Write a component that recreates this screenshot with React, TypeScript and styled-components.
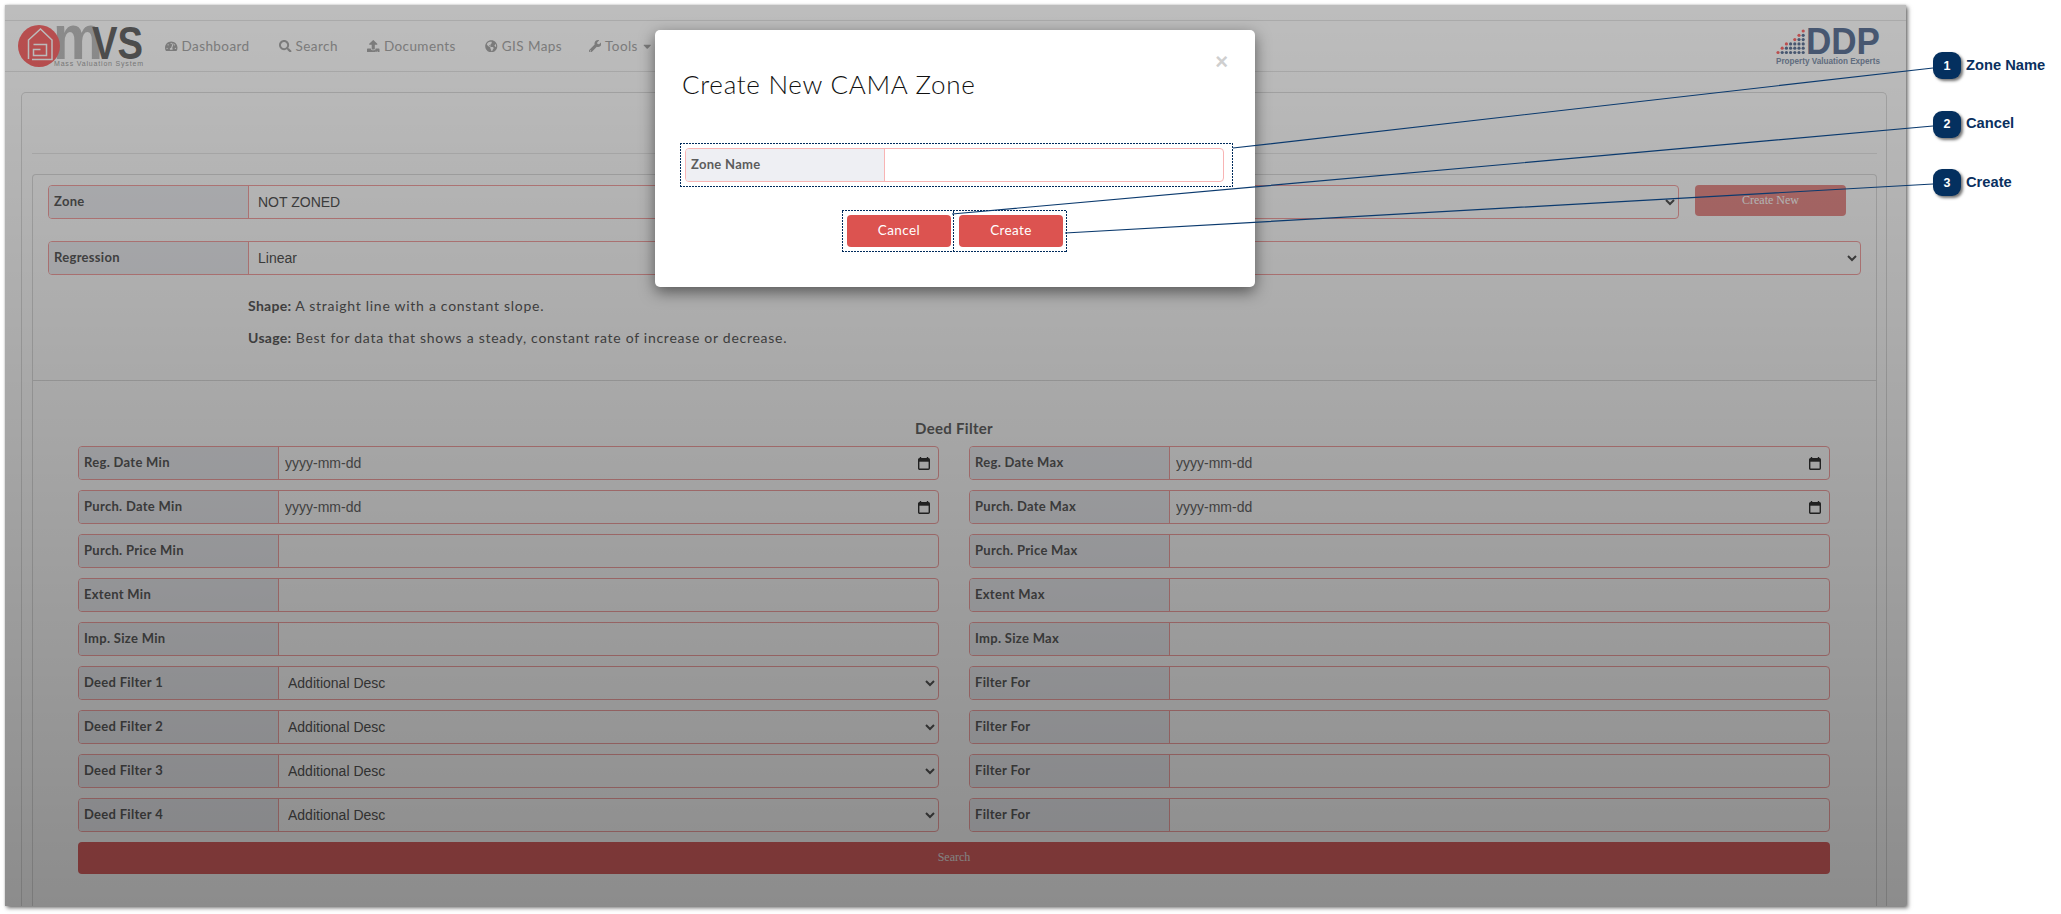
import React from 'react';
import styled, { createGlobalStyle } from 'styled-components';
import { FaCaretDown, FaGlobeAmericas, FaSearch, FaTachometerAlt, FaUpload, FaWrench } from 'react-icons/fa';

const UI_FONT = `Lato, "Noto Sans", sans-serif`;
const FORM_FONT = `"Liberation Sans", Arial, sans-serif`;
const RED = '#dc5350';
const PINK = '#f5a3a3';
const NAVY = '#0b3a6e';

const GlobalStyle = createGlobalStyle`
  html, body {
    margin: 0;
    padding: 0;
    background: #fff;
    overflow: hidden;
  }
`;

const Canvas = styled.div`
  position: relative;
  width: 2061px;
  height: 914px;
  padding: 5px 0 0 5px;
  box-sizing: border-box;
  background: #fff;
  font-family: ${UI_FONT};
  overflow: hidden;
`;

const Shot = styled.div`
  position: relative;
  width: 1901px;
  height: 901px;
  background: #fff;
  box-shadow: 2px 2px 4px rgba(0, 0, 0, 0.55), 0 0 2px rgba(0, 0, 0, 0.2);
  overflow: hidden;
  display: flex;
  flex-direction: column;
`;

const Backdrop = styled.div`
  position: absolute;
  inset: 0;
  background: linear-gradient(180deg, rgba(0, 0, 0, 0.26), rgba(0, 0, 0, 0.45));
`;

const TopStrip = styled.div`
  height: 15px;
  flex: none;
  border-bottom: 1px solid #e6e6e6;
`;

const Navbar = styled.nav`
  height: 50px;
  flex: none;
  display: flex;
  align-items: center;
  padding: 0 26px 0 13px;
  border-bottom: 1px solid #e6e6e6;
`;

const NavItem = styled.a`
  display: flex;
  align-items: center;
  gap: 4px;
  margin-right: 29.5px;
  color: #a8a8a8;
  font-size: 13.5px;
  letter-spacing: 0.42px;
  white-space: nowrap;

  svg {
    font-size: 12.5px;
    flex: none;
  }
`;

const ToolsItem = styled(NavItem)`
  margin-left: -3px;

  svg:last-child {
    margin-left: -1px;
  }
`;

const NavBanner = styled.div<{ $width: number; $color: string; $offset: number }>`
  flex: none;
  height: 32px;
  width: ${(p) => p.$width}px;
  margin-left: ${(p) => p.$offset}px;
  border-radius: 3px;
  background: ${(p) => p.$color};
`;

const Body = styled.main`
  flex: 1;
  display: flex;
  padding: 20px 19px 0 16px;
  min-height: 0;
`;

const Panel = styled.section`
  flex: 1;
  border: 1px solid #ddd;
  border-bottom: 0;
  border-radius: 5px 5px 0 0;
  padding: 0 9px 0 10px;
`;

const PanelHead = styled.div`
  height: 60px;
  border-bottom: 1px solid #e8e8e8;
  margin-bottom: 20px;
`;

const Card = styled.div`
  height: 100%;
  border: 1px solid #ddd;
  border-bottom: 0;
  border-radius: 4px 4px 0 0;
`;

const ZoneSection = styled.div`
  height: 206px;
  box-sizing: border-box;
  padding: 10px 15px 0 15px;
  border-bottom: 1px solid #ddd;
`;

const ToolRow = styled.div`
  display: flex;
  gap: 16px;
  margin-bottom: 22px;
`;

const Field = styled.div<{ $border?: string }>`
  flex: 1;
  display: flex;
  height: 34px;
  box-sizing: border-box;
  border: 1px solid ${(p) => p.$border || PINK};
  border-radius: 4px;
  min-width: 0;
  background: #fff;
`;

const FieldLabel = styled.label<{ $width: number; $border?: string }>`
  flex: none;
  display: flex;
  align-items: center;
  width: ${(p) => p.$width}px;
  box-sizing: border-box;
  padding: 0 0 2px 5px;
  background: #eeeff3;
  border-right: 1px solid ${(p) => p.$border || PINK};
  border-radius: 3px 0 0 3px;
  color: #5c5c5c;
  font-size: 13px;
  font-weight: 700;
  letter-spacing: 0.3px;
  white-space: nowrap;
`;

const FieldSelect = styled.select`
  flex: 1;
  min-width: 0;
  border: 0;
  padding: 0 5px;
  background: transparent;
  color: #555;
  font: 14px ${FORM_FONT};
`;

const FieldInput = styled.input`
  flex: 1;
  min-width: 0;
  border: 0;
  padding: 0 6px;
  background: transparent;
  color: #555;
  font: 14px ${FORM_FONT};
  outline: none;

  &::placeholder {
    color: #666;
    opacity: 1;
  }
`;

const CalendarIcon = styled.svg`
  flex: none;
  align-self: center;
  width: 12px;
  height: 13px;
  margin-right: 8px;
`;

const FlatButton = styled.button<{ $muted?: boolean }>`
  border: 0;
  border-radius: 4px;
  background: ${RED};
  color: #fff;
  font: 12px "Liberation Serif", "Times New Roman", serif;
  opacity: ${(p) => (p.$muted ? 0.65 : 1)};
`;

const CreateNewButton = styled(FlatButton)`
  flex: none;
  width: 151px;
  height: 31px;
  margin-right: 15px;
`;

const Note = styled.p`
  margin: 0 0 14px 200px;
  color: #5c5c5c;
  font-size: 14px;
  line-height: 18px;
  letter-spacing: 0.72px;

  b {
    font-weight: 700;
    letter-spacing: 0.3px;
  }
`;

const FilterSection = styled.div`
  padding: 0 46px 0 45px;
`;

const FilterTitle = styled.h4`
  margin: 0;
  height: 65px;
  box-sizing: border-box;
  padding-top: 38px;
  text-align: center;
  color: #666;
  font-size: 15px;
  line-height: 18px;
  font-weight: 700;
  letter-spacing: 0.3px;
`;

const FilterGrid = styled.div`
  display: grid;
  grid-template-columns: 861px 861px;
  column-gap: 30px;
  row-gap: 10px;
`;

const SearchButton = styled(FlatButton)`
  display: block;
  width: 100%;
  height: 32px;
  margin-top: 10px;
  padding-bottom: 3px;
  background: #dc6262;
  color: #e8e8e8;
`;

const Modal = styled.div`
  position: absolute;
  left: 650px;
  top: 25px;
  width: 600px;
  height: 257px;
  background: #fff;
  border-radius: 5px;
  box-shadow: 0 5px 15px rgba(0, 0, 0, 0.5);
`;

const ModalHead = styled.header`
  height: 113px;
  box-sizing: border-box;
  padding: 21px 27px 0 27px;
`;

const Close = styled.span`
  display: block;
  text-align: right;
  height: 21px;
  color: #cfcfcf;
  font: 700 22px/21px ${FORM_FONT};
`;

const ModalTitle = styled.h3`
  margin: -3px 0 0;
  color: #111;
  font-size: 26px;
  line-height: 30px;
  font-weight: 300;
  letter-spacing: 0.72px;
  white-space: nowrap;
`;

// the capture tool's marker: 2px dash, 1px gap, denser than a css dotted border
const Marked = styled.div`
  box-sizing: border-box;
  background:
    repeating-linear-gradient(90deg, #002b5c 0 2px, transparent 2px 3px) top / 100% 1px no-repeat,
    repeating-linear-gradient(90deg, #002b5c 0 2px, transparent 2px 3px) bottom / 100% 1px no-repeat,
    repeating-linear-gradient(0deg, #002b5c 0 2px, transparent 2px 3px) left / 1px 100% no-repeat,
    repeating-linear-gradient(0deg, #002b5c 0 2px, transparent 2px 3px) right / 1px 100% no-repeat;
`;

const MarkedField = styled(Marked)`
  display: flex;
  margin: 0 22px 0 25px;
  padding: 5px 9px 5px 5px;
`;

const ModalFoot = styled.footer`
  display: flex;
  margin: 23px 0 0 187px;
`;

const MarkedCancel = styled(Marked)`
  padding: 5px 3px 5px 5px;
`;

const MarkedCreate = styled(Marked)`
  margin-left: -1px;
  padding: 5px 4px 5px 6px;
`;

const ModalButton = styled.button`
  display: block;
  width: 104px;
  height: 32px;
  padding: 0 0 3px;
  border: 0;
  border-radius: 4px;
  background: ${RED};
  color: #fff;
  font: 13.5px ${UI_FONT};
  letter-spacing: 0.4px;
`;

const Leaders = styled.svg`
  position: absolute;
  left: 0;
  top: 0;
  pointer-events: none;
`;

const Callouts = styled.div`
  position: absolute;
  left: 1933px;
  top: 52px;
  display: flex;
  flex-direction: column;
  gap: 31.5px;
`;

const Callout = styled.div`
  display: flex;
  align-items: center;
  gap: 5px;
`;

const Badge = styled.span`
  width: 28px;
  height: 27px;
  border-radius: 9px;
  display: flex;
  align-items: center;
  justify-content: center;
  background: #04305f;
  box-shadow: 2px 2px 3px rgba(0, 0, 0, 0.55);
  color: #fff;
  font: 700 12.5px ${FORM_FONT};
`;

const CalloutText = styled.span`
  color: #0a3060;
  font: 700 14.7px ${FORM_FONT};
  margin-top: -2px;
`;

const MvsLogo = () => (
  <svg width="126" height="44" viewBox="0 0 126 44" style={{ flex: 'none', marginRight: 21, marginTop: 2, overflow: 'visible' }}>
    <text x="35" y="34" fontFamily="Liberation Sans" fontWeight="700" fontSize="63" fill="#bcbcbc" textLength="50" lengthAdjust="spacingAndGlyphs">m</text>
    <text x="74" y="34" fontFamily="Liberation Sans" fontWeight="700" fontSize="46" fill="#686868" textLength="51" lengthAdjust="spacingAndGlyphs">VS</text>
    <text x="36" y="40.500" fontFamily="Liberation Sans" fontSize="7" fill="#a4a4a4" textLength="89">Mass Valuation System</text>
    <circle cx="21" cy="21" r="21" fill="#f96a6b" />
    <path d="M10.500 34V15L22.500 4L34 15V34.500H14" fill="none" stroke="#fff" strokeWidth="1.500" />
    <path d="M15.500 19.500h13v11H15.500v-6h7" fill="none" stroke="#fff" strokeWidth="1.500" />
  </svg>
);

const dotRows = [0, 1, 2, 3, 4, 5];

const DdpLogo = () => (
  <svg width="104" height="38" viewBox="0 0 104 38" style={{ flex: 'none', marginLeft: 'auto', marginTop: 3, overflow: 'visible' }}>
    {dotRows.map((r) =>
      [0, 1, 2, 3, 4, 5, 6].filter((c) => c >= Math.min(r + (r > 2 ? 1 : 0), 6)).map((c, i) => (
        <circle
          key={`${r}-${c}`}
          cx={2 + c * 4.2}
          cy={23.5 - r * 4.3}
          r="1.6"
          fill={i === 0 ? '#ff6b6b' : '#617699'}
        />
      )),
    )}
    <text x="30" y="25" fontFamily="Liberation Sans" fontWeight="700" fontSize="36" fill="#617699" textLength="74" lengthAdjust="spacingAndGlyphs">DDP</text>
    <text x="0" y="34.500" fontFamily="Liberation Sans" fontWeight="700" fontSize="9.500" fill="#8494ad" textLength="104" lengthAdjust="spacingAndGlyphs">Property Valuation Experts</text>
  </svg>
);

const Calendar = () => (
  <CalendarIcon viewBox="0 0 12 13">
    <path d="M2.500 0v1.500M9.500 0v1.500" stroke="#333" strokeWidth="1.400" />
    <rect x="0.700" y="1.700" width="10.600" height="10.600" rx="1" fill="none" stroke="#333" strokeWidth="1.400" />
    <rect x="0.700" y="1.700" width="10.600" height="3" fill="#333" />
  </CalendarIcon>
);

type FilterRow = { label: string; kind: 'date' | 'text' | 'select' };

const filterRows: FilterRow[] = [
  { label: 'Reg. Date Min', kind: 'date' },
  { label: 'Reg. Date Max', kind: 'date' },
  { label: 'Purch. Date Min', kind: 'date' },
  { label: 'Purch. Date Max', kind: 'date' },
  { label: 'Purch. Price Min', kind: 'text' },
  { label: 'Purch. Price Max', kind: 'text' },
  { label: 'Extent Min', kind: 'text' },
  { label: 'Extent Max', kind: 'text' },
  { label: 'Imp. Size Min', kind: 'text' },
  { label: 'Imp. Size Max', kind: 'text' },
  { label: 'Deed Filter 1', kind: 'select' },
  { label: 'Filter For', kind: 'text' },
  { label: 'Deed Filter 2', kind: 'select' },
  { label: 'Filter For', kind: 'text' },
  { label: 'Deed Filter 3', kind: 'select' },
  { label: 'Filter For', kind: 'text' },
  { label: 'Deed Filter 4', kind: 'select' },
  { label: 'Filter For', kind: 'text' },
];

const FilterField: React.FC<FilterRow> = ({ label, kind }) => (
  <Field>
    <FieldLabel $width={200}>{label}</FieldLabel>
    {kind === 'select' && (
      <FieldSelect>
        <option>Additional Desc</option>
      </FieldSelect>
    )}
    {kind === 'text' && <FieldInput />}
    {kind === 'date' && (
      <>
        <FieldInput placeholder="yyyy-mm-dd" />
        <Calendar />
      </>
    )}
  </Field>
);

const App: React.FC = () => (
  <Canvas>
    <GlobalStyle />
    <Shot>
      <TopStrip />
      <Navbar>
        <MvsLogo />
        <NavItem><FaTachometerAlt /> Dashboard</NavItem>
        <NavItem><FaSearch /> Search</NavItem>
        <NavItem><FaUpload /> Documents</NavItem>
        <NavItem><FaGlobeAmericas /> GIS Maps</NavItem>
        <ToolsItem><FaWrench /> Tools <FaCaretDown /></ToolsItem>
        <NavBanner $width={296} $color={RED} $offset={94} />
        <NavBanner $width={37} $color="#ddd" $offset={6} />
        <DdpLogo />
      </Navbar>
      <Body>
        <Panel>
          <PanelHead />
          <Card>
            <ZoneSection>
              <ToolRow>
                <Field>
                  <FieldLabel $width={200}>Zone</FieldLabel>
                  <FieldSelect>
                    <option>NOT ZONED</option>
                  </FieldSelect>
                </Field>
                <CreateNewButton $muted>Create New</CreateNewButton>
              </ToolRow>
              <ToolRow>
                <Field>
                  <FieldLabel $width={200}>Regression</FieldLabel>
                  <FieldSelect>
                    <option>Linear</option>
                  </FieldSelect>
                </Field>
              </ToolRow>
              <Note><b>Shape:</b> A straight line with a constant slope.</Note>
              <Note><b>Usage:</b> Best for data that shows a steady, constant rate of increase or decrease.</Note>
            </ZoneSection>
            <FilterSection>
              <FilterTitle>Deed Filter</FilterTitle>
              <FilterGrid>
                {filterRows.map((row, i) => (
                  <FilterField key={i} {...row} />
                ))}
              </FilterGrid>
              <SearchButton>Search</SearchButton>
            </FilterSection>
          </Card>
        </Panel>
      </Body>
      <Backdrop />
      <Modal>
        <ModalHead>
          <Close>×</Close>
          <ModalTitle>Create New CAMA Zone</ModalTitle>
        </ModalHead>
        <MarkedField>
          <Field $border="#f8b4b4">
            <FieldLabel $width={199} $border="#f8b4b4">Zone Name</FieldLabel>
            <FieldInput />
          </Field>
        </MarkedField>
        <ModalFoot>
          <MarkedCancel>
            <ModalButton>Cancel</ModalButton>
          </MarkedCancel>
          <MarkedCreate>
            <ModalButton>Create</ModalButton>
          </MarkedCreate>
        </ModalFoot>
      </Modal>
    </Shot>
    <Leaders width="2061" height="914" viewBox="0 0 2061 914">
      <path d="M1933 68L1233 148M1933 126L952 214M1933 184L1065 233" stroke={NAVY} strokeWidth="1.200" fill="none" />
    </Leaders>
    <Callouts>
      <Callout><Badge>1</Badge><CalloutText>Zone Name</CalloutText></Callout>
      <Callout><Badge>2</Badge><CalloutText>Cancel</CalloutText></Callout>
      <Callout><Badge>3</Badge><CalloutText>Create</CalloutText></Callout>
    </Callouts>
  </Canvas>
);

export default App;
